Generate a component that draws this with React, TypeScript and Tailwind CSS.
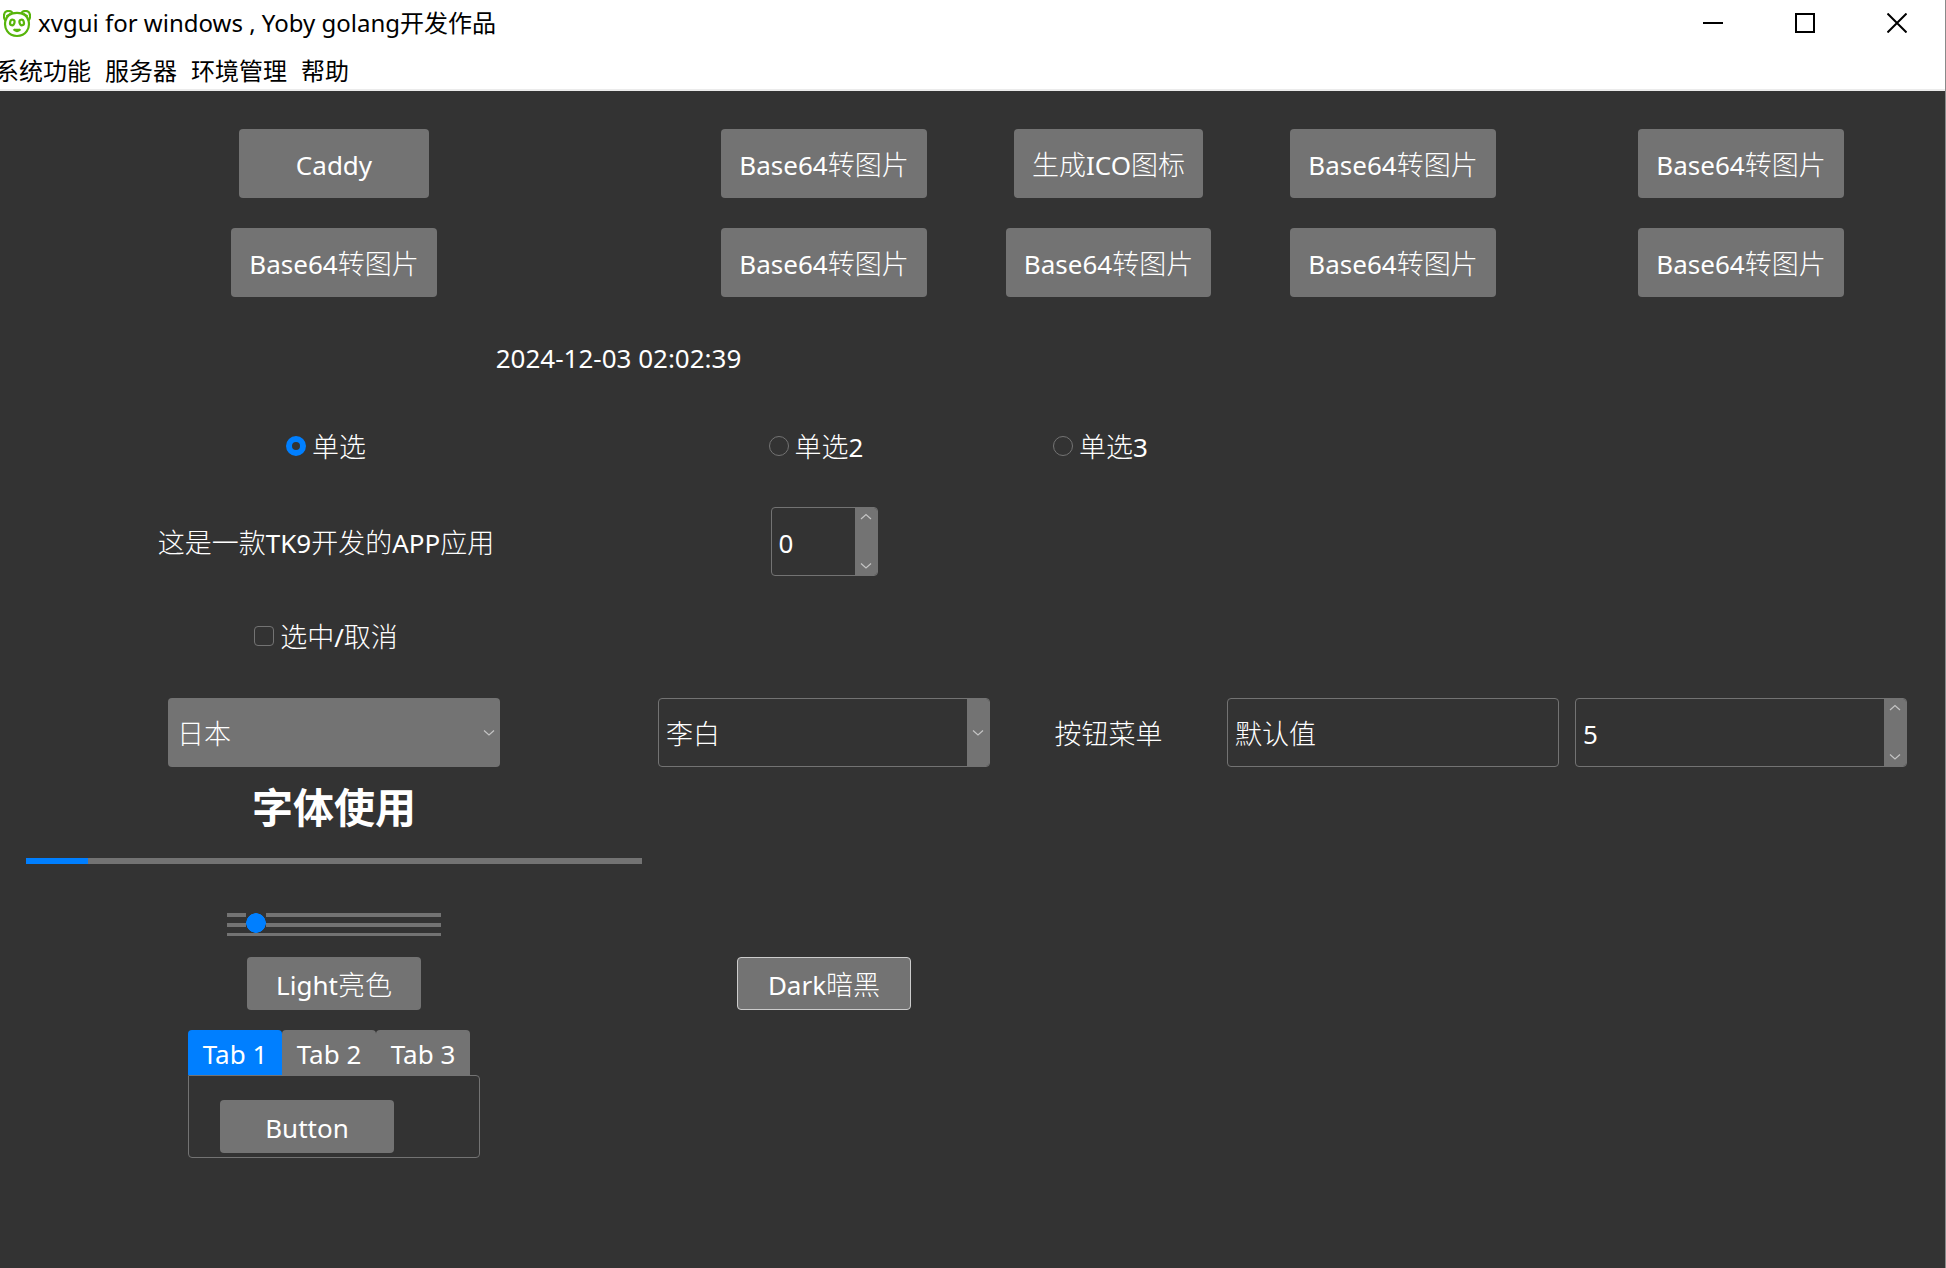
import React, { useState } from 'react';

const BUTTON =
  'rounded-[4px] bg-[#737373] pt-[2px] text-center text-white hover:bg-[#7e7e7e]';
const TALL = 'h-[69px] px-[18px]';
const SHORT = 'h-[53px] w-[174px]';
const FIELD =
  'flex h-[69px] overflow-hidden rounded-[4px] border border-[#737373]';
const INPUT = 'min-w-0 flex-1 bg-transparent pt-[2px] pl-[7px] outline-none';
const MENUS = ['系统功能', '服务器', '环境管理', '帮助'];

/* Thin strokes for Chinese runs inside regular Latin text. */
function Zh({ children }: { children: React.ReactNode }) {
  return <span className="text-[27px] font-light">{children}</span>;
}

function Chevron({ up = false }: { up?: boolean }) {
  return (
    <svg
      width="12"
      height="8"
      viewBox="0 0 12 8"
      fill="none"
      stroke="#c4c4c4"
      strokeWidth="1.2"
      aria-hidden="true"
    >
      <path d={up ? 'M1 6 L6 1.5 L11 6' : 'M1 1.5 L6 6 L11 1.5'} />
    </svg>
  );
}

function PandaIcon() {
  return (
    <svg
      width="28"
      height="28"
      viewBox="0 0 28 28"
      fill="none"
      stroke="#57b50b"
      strokeWidth="2.2"
      aria-hidden="true"
    >
      <path d="M2.6 10.5 C0 8 0.5 2.5 3.5 1.3 C6 0.6 8.5 1.4 9.6 3 M18.4 3 C19.5 1.4 22 0.6 24.5 1.3 C27.5 2.5 28 8 25.4 10.5" />
      <path d="M3.5 6.5 L7.5 3.8 M24.5 6.5 L20.5 3.8" />
      <path d="M14 2.8 C20.5 2.8 24.5 6 25.6 11 C27.2 18 23 26 14 26 C5 26 0.8 18 2.4 11 C3.5 6 7.5 2.8 14 2.8 Z" />
      <ellipse cx="9.3" cy="12.5" rx="2.2" ry="2.8" transform="rotate(15 9.3 12.5)" />
      <ellipse cx="18.7" cy="12.5" rx="2.2" ry="2.8" transform="rotate(-15 18.7 12.5)" />
      <path d="M10.5 19.3 Q14 22.8 17.5 19.3 M11 19.8 H17" />
    </svg>
  );
}

function Cell({
  children,
  className = '',
}: {
  children?: React.ReactNode;
  className?: string;
}) {
  return (
    <div className={`flex items-center justify-center ${className}`}>{children}</div>
  );
}

function Row({
  height,
  children,
}: {
  height: string;
  children: React.ReactNode;
}) {
  return (
    <div
      className={`grid grid-cols-[632fr_348fr_221fr_348fr_348fr] ${height}`}
    >
      {children}
    </div>
  );
}

function Base64Button() {
  return (
    <button type="button" className={`${BUTTON} ${TALL}`}>
      Base64<Zh>转图片</Zh>
    </button>
  );
}

function Spinbox({
  label,
  initial,
  width,
}: {
  label: string;
  initial: number;
  width: string;
}) {
  const [value, setValue] = useState(initial);
  return (
    <div className={`${FIELD} ${width}`}>
      <input
        aria-label={label}
        value={value}
        onChange={(e) => setValue(Number(e.target.value) || 0)}
        className={INPUT}
      />
      <div className="flex w-[22px] flex-col justify-between bg-[#737373] py-[5px]">
        <button
          type="button"
          aria-label="增加"
          onClick={() => setValue(value + 1)}
          className="flex h-6 items-start justify-center"
        >
          <Chevron up />
        </button>
        <button
          type="button"
          aria-label="减少"
          onClick={() => setValue(value - 1)}
          className="flex h-6 items-end justify-center"
        >
          <Chevron />
        </button>
      </div>
    </div>
  );
}

function Radio({
  name,
  suffix = '',
  checked,
  onSelect,
}: {
  name: string;
  suffix?: string;
  checked: boolean;
  onSelect: () => void;
}) {
  return (
    <label className="flex items-center gap-[6px] pr-4">
      <input
        type="radio"
        name="choice"
        checked={checked}
        onChange={onSelect}
        className="mb-[2px] size-5 appearance-none rounded-full border border-[#737373] checked:border-[6px] checked:border-[#007fff]"
      />
      <span>
        <Zh>{name}</Zh>
        {suffix}
      </span>
    </label>
  );
}

function TitleBar() {
  const control = 'flex h-12 w-[92px] items-center justify-center pb-[2px] hover:bg-gray-200';
  return (
    <header className="bg-white text-2xl text-black">
      <div className="flex h-12 items-center pr-[2px] pl-[3px]">
        <PandaIcon />
        <h1 className="flex-1 pb-[2px] pl-[7px] leading-8">
          xvgui for windows , Yoby golang开发作品
        </h1>
        <button type="button" aria-label="最小化" className={control}>
          <svg width="20" height="20" viewBox="0 0 20 20" stroke="black" strokeWidth="2">
            <path d="M0 10 H20" />
          </svg>
        </button>
        <button type="button" aria-label="最大化" className={control}>
          <svg width="20" height="20" viewBox="0 0 20 20" fill="none" stroke="black" strokeWidth="2">
            <rect x="1" y="1" width="18" height="18" />
          </svg>
        </button>
        <button type="button" aria-label="关闭" className={control}>
          <svg width="20" height="20" viewBox="0 0 20 20" stroke="black" strokeWidth="2">
            <path d="M0.5 0.5 L19.5 19.5 M19.5 0.5 L0.5 19.5" />
          </svg>
        </button>
      </div>
      <nav className="flex h-[43px] items-center gap-[14px] border-b-2 border-[#ebebeb] pt-[5px]">
        {MENUS.map((menu) => (
          <button key={menu} type="button" className="leading-8 first:-ml-[5px]">
            {menu}
          </button>
        ))}
      </nav>
    </header>
  );
}

function Notebook() {
  const [active, setActive] = useState(0);
  return (
    <div className="w-[292px]">
      <div role="tablist" className="flex">
        {['Tab 1', 'Tab 2', 'Tab 3'].map((tab, i) => (
          <button
            key={tab}
            type="button"
            role="tab"
            aria-selected={i === active}
            onClick={() => setActive(i)}
            className={`h-[45px] w-[94px] rounded-t-[4px] pt-[2px] ${
              i === active ? 'bg-[#007fff]' : 'bg-[#737373]'
            }`}
          >
            {tab}
          </button>
        ))}
      </div>
      <div
        role="tabpanel"
        className="rounded-b-[4px] rounded-tr-[4px] border border-[#737373] pt-6 pb-1 pl-[31px]"
      >
        <button type="button" className={`${BUTTON} ${SHORT} block`}>
          Button
        </button>
      </div>
    </div>
  );
}

export default function App() {
  const [choice, setChoice] = useState(0);
  const [level, setLevel] = useState(10);
  const [poet, setPoet] = useState('李白');
  const [entry, setEntry] = useState('默认值');

  return (
    <div className="min-h-screen border-r border-[#8a8a8a] bg-[#333333] font-['Noto_Sans','Noto_Sans_CJK_SC',sans-serif] text-[26px] leading-9 text-white">
      <TitleBar />
      <main className="pt-[23px] pr-[30px] pl-[18px]">
        <Row height="h-[99px]">
          <Cell>
            <button type="button" className={`${BUTTON} h-[69px] w-[190px]`}>
              Caddy
            </button>
          </Cell>
          <Cell><Base64Button /></Cell>
          <Cell>
            <button type="button" className={`${BUTTON} ${TALL}`}>
              <Zh>生成</Zh>ICO<Zh>图标</Zh>
            </button>
          </Cell>
          <Cell><Base64Button /></Cell>
          <Cell><Base64Button /></Cell>
        </Row>

        <Row height="h-[99px]">
          <Cell><Base64Button /></Cell>
          <Cell><Base64Button /></Cell>
          <Cell><Base64Button /></Cell>
          <Cell><Base64Button /></Cell>
          <Cell><Base64Button /></Cell>
        </Row>

        <Row height="h-[93px]">
          <Cell className="col-span-3 pb-[2px]">
            <time dateTime="2024-12-03T02:02:39">2024-12-03 02:02:39</time>
          </Cell>
        </Row>

        <Row height="h-[87px]">
          <Cell className="pb-1">
            <Radio name="单选" checked={choice === 0} onSelect={() => setChoice(0)} />
          </Cell>
          <Cell className="pb-1">
            <Radio name="单选" suffix="2" checked={choice === 1} onSelect={() => setChoice(1)} />
          </Cell>
          <Cell className="pb-1">
            <Radio name="单选" suffix="3" checked={choice === 2} onSelect={() => setChoice(2)} />
          </Cell>
        </Row>

        <Row height="h-[99px]">
          <Cell>
            <p className="pt-[2px] pr-4">
              <Zh>这是一款</Zh>TK9<Zh>开发的</Zh>APP<Zh>应用</Zh>
            </p>
          </Cell>
          <Cell><Spinbox label="数量" initial={0} width="w-[107px]" /></Cell>
        </Row>

        <Row height="h-[92px]">
          <Cell>
            <label className="flex items-center gap-[6px] pr-4">
              <input
                type="checkbox"
                className="mb-[2px] size-5 appearance-none rounded-[4px] border border-[#737373] checked:bg-[#007fff]"
              />
              <span>
                <Zh>选中</Zh>/<Zh>取消</Zh>
              </span>
            </label>
          </Cell>
        </Row>

        <Row height="h-[99px]">
          <Cell>
            <div className="relative w-[332px]">
              <select
                aria-label="国家"
                className="h-[69px] w-full appearance-none rounded-[4px] bg-[#737373] pt-[2px] pl-[9px] text-[27px] font-light"
              >
                <option>日本</option>
                <option>中国</option>
              </select>
              <span className="pointer-events-none absolute inset-y-0 right-[5px] flex items-center">
                <Chevron />
              </span>
            </div>
          </Cell>
          <Cell>
            <div className={`${FIELD} w-[332px]`}>
              <input
                aria-label="诗人"
                value={poet}
                onChange={(e) => setPoet(e.target.value)}
                className={`${INPUT} text-[27px] font-light`}
              />
              <button
                type="button"
                aria-label="展开"
                className="flex w-[22px] items-center justify-center bg-[#737373]"
              >
                <Chevron />
              </button>
            </div>
          </Cell>
          <Cell>
            <button type="button" className="pt-[2px]"><Zh>按钮菜单</Zh></button>
          </Cell>
          <Cell>
            <div className={`${FIELD} w-[332px]`}>
              <input
                aria-label="输入"
                value={entry}
                onChange={(e) => setEntry(e.target.value)}
                className={`${INPUT} text-[27px] font-light`}
              />
            </div>
          </Cell>
          <Cell><Spinbox label="数值" initial={5} width="w-[332px]" /></Cell>
        </Row>

        <Row height="h-[52px]">
          <Cell className="pb-[2px]">
            <h2 className="text-[41px] leading-none font-bold">字体使用</h2>
          </Cell>
        </Row>

        <Row height="h-[54px]">
          <Cell className="px-2">
            <progress
              aria-label="进度"
              value={10}
              max={100}
              className="h-[6px] w-full appearance-none [&::-webkit-progress-bar]:bg-[#737373] [&::-webkit-progress-value]:bg-[#007fff]"
            />
          </Cell>
        </Row>

        <Row height="h-[61px]">
          <Cell className="items-end pb-[13px]">
            <div className="h-[23px] w-[214px] bg-[linear-gradient(#737373_4px,transparent_4px,transparent_10px,#737373_10px,#737373_14px,transparent_14px,transparent_20px,#737373_20px)]">
              <input
                type="range"
                aria-label="滑块"
                min={0}
                max={100}
                value={level}
                onChange={(e) => setLevel(Number(e.target.value))}
                className="block h-5 w-full appearance-none bg-transparent [&::-webkit-slider-thumb]:size-5 [&::-webkit-slider-thumb]:appearance-none [&::-webkit-slider-thumb]:bg-[radial-gradient(circle,#007fff_9.5px,#333333_10px)]"
              />
            </div>
          </Cell>
        </Row>

        <Row height="h-[69px]">
          <Cell>
            <button type="button" className={`${BUTTON} ${SHORT}`}>
              Light<Zh>亮色</Zh>
            </button>
          </Cell>
          <Cell>
            <button type="button" className={`${BUTTON} ${SHORT} border border-[#cccccc]`}>
              Dark<Zh>暗黑</Zh>
            </button>
          </Cell>
        </Row>

        <Row height="pt-3">
          <Cell><Notebook /></Cell>
        </Row>
      </main>
    </div>
  );
}
